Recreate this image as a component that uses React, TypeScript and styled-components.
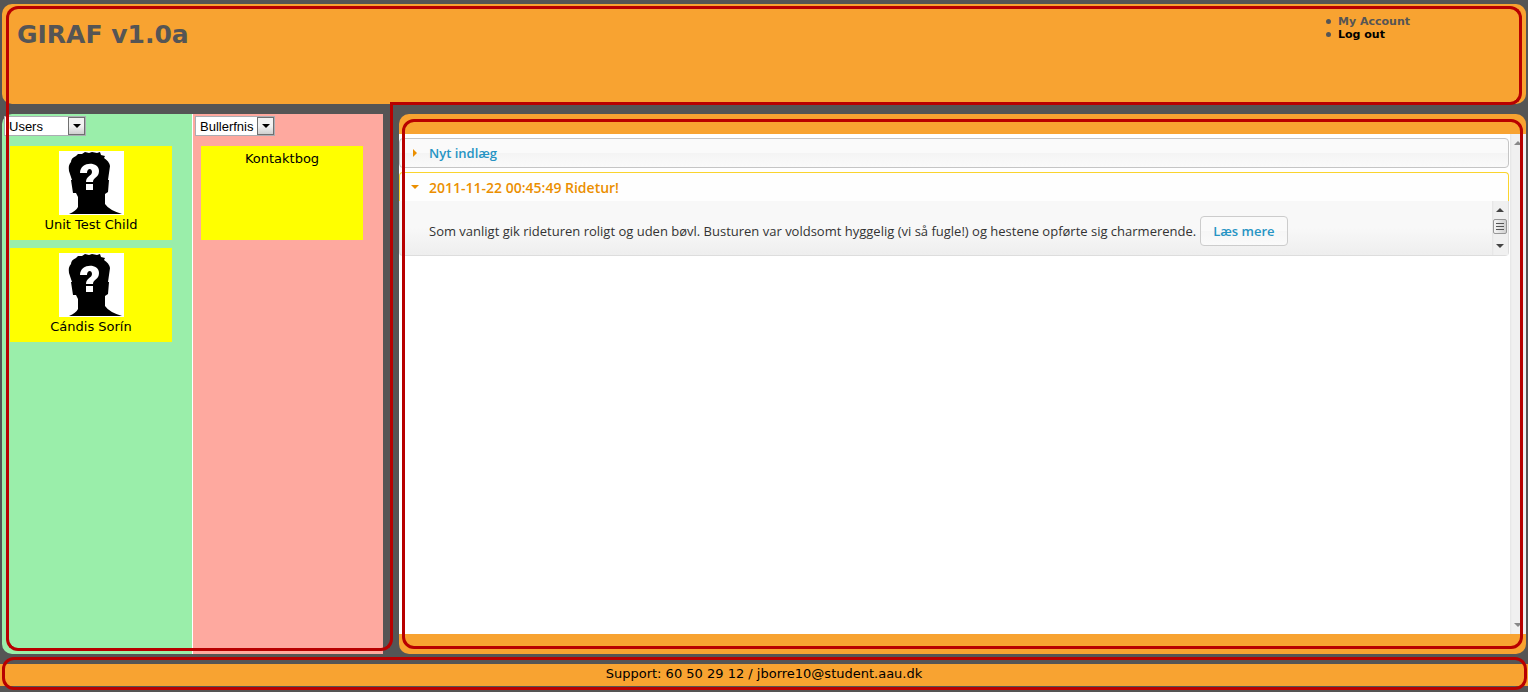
import React from "react";
import styled, { createGlobalStyle, css } from "styled-components";

const GlobalStyle = createGlobalStyle`
  * { box-sizing: border-box; }
  body {
    margin: 0;
    background: #555;
    color: #000;
    font-family: Verdana, "DejaVu Sans", sans-serif;
    font-size: 13px;
  }
`;

const orange = "#f8a331";
const red = "#b80000";
const sansUi = '"Trebuchet MS", "Open Sans", sans-serif';

const Page = styled.div`
  position: relative;
  min-height: 100vh;
  display: flex;
  flex-direction: column;
  padding-top: 4px;
  overflow: hidden;
`;

const Header = styled.header`
  display: flex;
  justify-content: space-between;
  align-items: flex-start;
  height: 100px;
  margin: 0 2px 10px;
  padding: 11px 116px 0 15px;
  border-radius: 10px;
  background: ${orange};
  color: #555;
`;

const Title = styled.h1`
  margin: 4px 0 0;
  font-size: 25px;
  line-height: 32px;
`;

const Menu = styled.ul`
  margin: 0;
  padding: 0;
  font-size: 11px;
  line-height: 13px;
  font-weight: bold;
  list-style: none;
`;

const MenuItem = styled.li`
  display: flex;
  align-items: center;
  gap: 7px;
  &::before {
    content: "";
    width: 5px;
    height: 5px;
    border-radius: 50%;
    background: #555;
  }
`;

const MenuLink = styled.a<{ $strong?: boolean }>`
  color: ${(p) => (p.$strong ? "#000" : "#555")};
  text-decoration: none;
`;

const Main = styled.main`
  flex: 1;
  display: flex;
  margin: 0 2px 10px;
`;

const Column = styled.section<{ $kind: "users" | "apps" }>`
  width: 190px;
  padding: 2px 0 0 2px;
  ${(p) =>
    p.$kind === "users"
      ? css`
          background: #9aeeaa;
          border-radius: 10px 0 0 10px;
        `
      : css`
          background: #fea99f;
          margin-left: 1px;
        `}
`;

const Columns = styled.div`
  display: flex;
  margin-right: 16px;
  background: linear-gradient(#fff, #fff) 190px 0 / 1px 100% no-repeat;
`;

const Picker = styled.div<{ $width: number }>`
  position: relative;
  width: ${(p) => p.$width}px;
  height: 20px;
`;

const Select = styled.select`
  appearance: none;
  width: 100%;
  height: 20px;
  margin: 0;
  padding: 1px 18px 0 4px;
  border: 1px solid #abadb3;
  border-radius: 0;
  background: #fff;
  color: #000;
  font-family: "Liberation Sans", Arial, sans-serif;
  font-size: 13px;
`;

const PickerArrow = styled.span`
  position: absolute;
  top: 1px;
  right: 1px;
  width: 17px;
  height: 18px;
  display: flex;
  align-items: center;
  justify-content: center;
  border: 1px solid #707070;
  background: linear-gradient(#f2f2f2 50%, #cfcfcf);
  pointer-events: none;
`;

const CardList = styled.div`
  display: flex;
  flex-direction: column;
  gap: 8px;
  margin: 10px 0 0 6px;
`;

const Card = styled.article`
  display: flex;
  flex-direction: column;
  align-items: center;
  width: 162px;
  height: 94px;
  padding-top: 5px;
  background: #ff0;
  line-height: 16px;
`;

const Portrait = styled.svg`
  width: 65px;
  height: 64px;
  margin-bottom: 2px;
`;

const Panel = styled.section`
  flex: 1;
  min-width: 0;
  display: flex;
  padding: 20px 0;
  border-radius: 10px;
  background: ${orange};
`;

const Content = styled.div`
  flex: 1;
  min-width: 0;
  padding: 4px 1px 0 0;
  background: #fff;
  font-family: ${sansUi};
  font-size: 13px;
`;

const Entry = styled.h2<{ $open?: boolean }>`
  display: flex;
  height: 30px;
  margin: 0;
  border: 1px solid ${(p) => (p.$open ? "#fad42e" : "#c5c5c5")};
  border-radius: ${(p) => (p.$open ? "4px 4px 0 0" : "4px")};
  background: ${(p) => (p.$open ? "#fefefe" : "linear-gradient(#fafafa 50%, #f4f4f4 50%, #fafafa)")};
  ${(p) => p.$open && "border-bottom: 0; margin-top: 4px; height: 29px;"}
`;

const EntryButton = styled.button<{ $open?: boolean }>`
  flex: 1;
  display: flex;
  align-items: center;
  gap: 10px;
  padding: 0 11px;
  border: 0;
  background: none;
  color: ${(p) => (p.$open ? "#eb8f00" : "#2694c4")};
  font-family: inherit;
  font-size: ${(p) => (p.$open ? 14 : 13)}px;
  font-weight: 600;
`;

const EntryBody = styled.div`
  display: flex;
  height: 55px;
  padding-left: 29px;
  border: 1px solid #ddd;
  border-top: 0;
  border-radius: 0 0 4px 4px;
  background: linear-gradient(#f8f8f8 50%, #eee);
  color: #333;
`;

const EntryText = styled.div`
  flex: 1;
  display: flex;
  align-items: center;
  gap: 4px;
  padding-top: 6px;
  white-space: nowrap;
`;

const MoreButton = styled.button`
  height: 30px;
  padding: 0 12px;
  border: 1px solid #ccc;
  border-radius: 4px;
  background: linear-gradient(#fafafa 50%, #f6f6f6 50%, #fafafa);
  color: #2694c4;
  font-family: inherit;
  font-size: 13px;
  font-weight: 600;
`;

const ScrollTrack = styled.div<{ $wide?: boolean }>`
  width: 16px;
  display: flex;
  flex-direction: column;
  align-items: center;
  justify-content: space-between;
  padding: 6px 0;
  background: linear-gradient(90deg, #e4e4e4, #f0f0f0 2px, #f0f0f0);
`;

const Thumb = styled.div`
  display: flex;
  width: 14px;
  height: 15px;
  align-items: center;
  justify-content: center;
  margin-bottom: 4px;
  border: 1px solid #979797;
  border-radius: 2px;
  background: linear-gradient(90deg, #f5f5f5, #d0d0d0);
`;

const Footer = styled.footer`
  height: 22px;
  margin-bottom: 6px;
  background: ${orange};
  line-height: 20px;
  text-align: center;
`;

/* Red outlines drawn over the page regions */
const Outline = styled.div`
  position: absolute;
  pointer-events: none;
  border: 0 solid ${red};
`;

const HeaderTop = styled(Outline)`
  inset: 6px 6px auto 6px;
  height: 34px;
  border-width: 3px 3px 0;
  border-radius: 12px 12px 0 0;
`;

const HeaderBottom = styled(Outline)`
  inset: 40px 6px auto 390px;
  height: 65px;
  border-width: 0 3px 3px 0;
  border-radius: 0 0 12px 0;
`;

const SideLeft = styled(Outline)`
  inset: 40px auto 41px 6px;
  width: 200px;
  border-width: 0 0 3px 3px;
  border-radius: 0 0 0 12px;
`;

const SideRight = styled(Outline)`
  inset: 102px auto 41px 206px;
  width: 187px;
  border-width: 0 3px 3px 0;
  border-radius: 0 0 12px 0;
`;

const PanelOutline = styled(Outline)`
  inset: 119px 5px 43px 402px;
  border-width: 3px;
  border-radius: 12px;
`;

const FooterOutline = styled(Outline)`
  inset: auto 1px 2px 2px;
  height: 33px;
  border-width: 3px;
  border-radius: 12px;
`;

type Direction = "up" | "down" | "right";

const arrowShapes: Record<Direction, string> = {
  up: "M0 5 4 1 8 5Z",
  down: "M0 1H8L4 5Z",
  right: "M2 0 6 4 2 8Z",
};

function Arrow({ direction, color = "#444" }: { direction: Direction; color?: string }) {
  return (
    <svg width="8" height={direction === "right" ? 8 : 6} aria-hidden="true">
      <path d={arrowShapes[direction]} fill={color} />
    </svg>
  );
}

function Silhouette() {
  return (
    <Portrait viewBox="0 0 65 64" aria-hidden="true">
      <path fill="#fff" d="M0 0H65V64H0Z" />
      <path d="M10 63Q17 60 19 56V46L17 42H14L12 29H13L10 20Q9 14 12 11Q12 7 17 5L19 3 23 3 26 1 30 2 33 1 38 2 41 1 42 4 46 5 45 7Q50 10 51 15L49 29H50L49 41 46 43V53Q50 59 63 63Z" />
      <path fill="#fff" d="M21 22C21 10 40 10 40 20C40 27 34 26 34 31H27C27 25 33 25 33 21C33 17 28 17 28 22ZM27 33H34V39H27Z" />
    </Portrait>
  );
}

function Dropdown({ label, width }: { label: string; width: number }) {
  return (
    <Picker $width={width}>
      <Select aria-label={label}>
        <option>{label}</option>
      </Select>
      <PickerArrow>
        <Arrow direction="down" color="#000" />
      </PickerArrow>
    </Picker>
  );
}

const children = ["Unit Test Child", "Cándis Sorín"];

export default function App() {
  return (
    <Page>
      <GlobalStyle />
      <Header>
        <Title>GIRAF v1.0a</Title>
        <Menu>
          <MenuItem><MenuLink href="#account">My Account</MenuLink></MenuItem>
          <MenuItem><MenuLink href="#logout" $strong>Log out</MenuLink></MenuItem>
        </Menu>
      </Header>
      <Main>
        <Columns>
          <Column $kind="users">
            <Dropdown label="Users" width={82} />
            <CardList>
              {children.map((name) => (
                <Card key={name}>
                  <Silhouette />
                  {name}
                </Card>
              ))}
            </CardList>
          </Column>
          <Column $kind="apps">
            <Dropdown label="Bullerfnis" width={80} />
            <CardList>
              <Card>Kontaktbog</Card>
            </CardList>
          </Column>
        </Columns>
        <Panel>
          <Content>
            <Entry>
              <EntryButton>
                <Arrow direction="right" color="#eb8f00" />
                Nyt indlæg
              </EntryButton>
            </Entry>
            <Entry $open>
              <EntryButton $open>
                <Arrow direction="down" color="#eb8f00" />
                2011-11-22 00:45:49 Ridetur!
              </EntryButton>
            </Entry>
            <EntryBody>
              <EntryText>
                <span>
                  Som vanligt gik rideturen roligt og uden bøvl. Busturen var voldsomt hyggelig (vi så fugle!) og hestene opførte sig charmerende.
                </span>
                <MoreButton>Læs mere</MoreButton>
              </EntryText>
              <ScrollTrack>
                <Arrow direction="up" />
                <Thumb>
                  <svg width="8" height="9" aria-hidden="true">
                    <path d="M0 1.5H8M0 4.5H8M0 7.5H8" stroke="#555" />
                  </svg>
                </Thumb>
                <Arrow direction="down" />
              </ScrollTrack>
            </EntryBody>
          </Content>
          <ScrollTrack>
            <Arrow direction="up" color="#888" />
            <Arrow direction="down" color="#888" />
          </ScrollTrack>
        </Panel>
      </Main>
      <Footer>Support: 60 50 29 12 / jborre10@student.aau.dk</Footer>
      <HeaderTop />
      <HeaderBottom />
      <SideLeft />
      <SideRight />
      <PanelOutline />
      <FooterOutline />
    </Page>
  );
}
